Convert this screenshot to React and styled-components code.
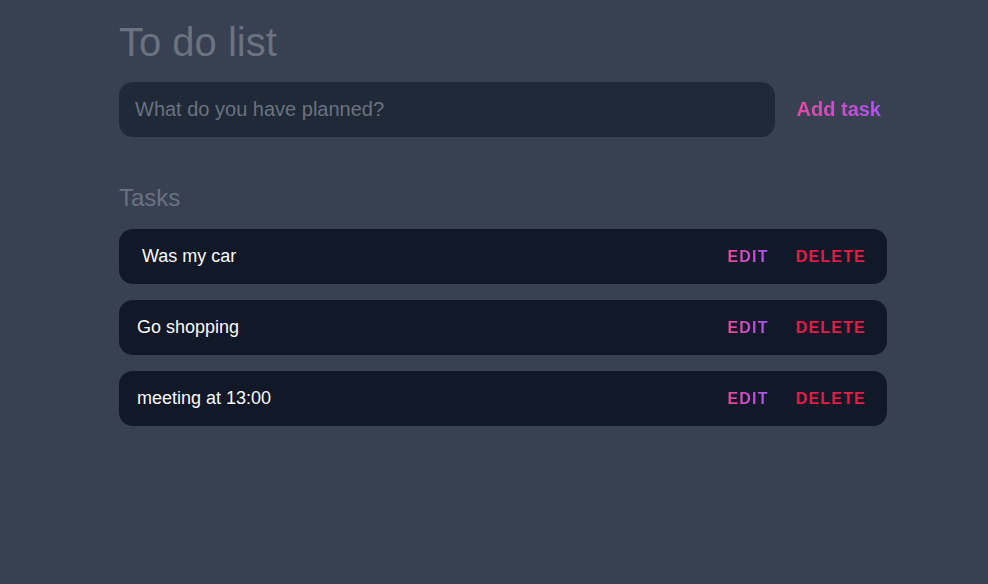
import React, { useState } from "react";
import styled, { createGlobalStyle } from "styled-components";

const GlobalStyle = createGlobalStyle`
  html, body {
    margin: 0;
    padding: 0;
    background: #374151;
    font-family: "Liberation Sans", Arial, sans-serif;
  }
`;

const Page = styled.div`
  min-height: 584px;
  background: #374151;
  padding: 22px 0 0 119px;
  box-sizing: border-box;
`;

const Container = styled.div`
  width: 768px;
  display: flex;
  flex-direction: column;
`;

const Title = styled.h1`
  margin: 0;
  font-size: 40px;
  line-height: 1;
  font-weight: 400;
  color: #6b7280;
`;

const Form = styled.form`
  display: flex;
  align-items: center;
  gap: 16px;
  margin-top: 20px;
`;

const Input = styled.input`
  flex: 1;
  height: 55px;
  box-sizing: border-box;
  border: none;
  outline: none;
  border-radius: 14px;
  background: #1f2937;
  padding: 0 16px;
  font-family: inherit;
  font-size: 20px;
  color: #e5e7eb;

  &::placeholder {
    color: #6b7280;
  }
`;

const GradientButton = styled.button`
  border: none;
  background: linear-gradient(90deg, #ec4899, #a855f7);
  -webkit-background-clip: text;
  background-clip: text;
  color: transparent;
  font-family: inherit;
  font-size: 20px;
  font-weight: 700;
  padding: 0 6px;
  cursor: pointer;
`;

const Heading = styled.h2`
  margin: 49px 0 0;
  font-size: 24px;
  line-height: 1;
  font-weight: 400;
  color: #6b7280;
`;

const List = styled.div`
  display: flex;
  flex-direction: column;
  gap: 16px;
  margin-top: 19px;
`;

const Row = styled.div`
  display: flex;
  align-items: center;
  height: 55px;
  padding: 0 21px 0 18px;
  border-radius: 14px;
  background: #111827;
`;

const TaskText = styled.span`
  flex: 1;
  font-size: 18px;
  color: #f9fafb;
  white-space: pre;
`;

const Actions = styled.div`
  display: flex;
  align-items: center;
  gap: 27px;
`;

const ActionButton = styled.button`
  border: none;
  padding: 0;
  font-family: inherit;
  font-size: 16px;
  font-weight: 700;
  letter-spacing: 1.2px;
  text-transform: uppercase;
  cursor: pointer;
  background: ${(p) =>
    p.$danger ? "none" : "linear-gradient(90deg, #ec4899, #a855f7)"};
  -webkit-background-clip: ${(p) => (p.$danger ? "border-box" : "text")};
  background-clip: ${(p) => (p.$danger ? "border-box" : "text")};
  color: ${(p) => (p.$danger ? "#e11d48" : "transparent")};
`;

export default function App() {
  const [tasks] = useState([" Was my car", "Go shopping", "meeting at 13:00"]);
  const [value, setValue] = useState("");

  return (
    <Page>
      <GlobalStyle />
      <Container>
        <Title>To do list</Title>
        <Form onSubmit={(e) => e.preventDefault()}>
          <Input
            placeholder="What do you have planned?"
            value={value}
            onChange={(e) => setValue(e.target.value)}
          />
          <GradientButton type="submit">Add task</GradientButton>
        </Form>
        <Heading>Tasks</Heading>
        <List>
          {tasks.map((t, i) => (
            <Row key={i}>
              <TaskText>{t}</TaskText>
              <Actions>
                <ActionButton>Edit</ActionButton>
                <ActionButton $danger>Delete</ActionButton>
              </Actions>
            </Row>
          ))}
        </List>
      </Container>
    </Page>
  );
}
